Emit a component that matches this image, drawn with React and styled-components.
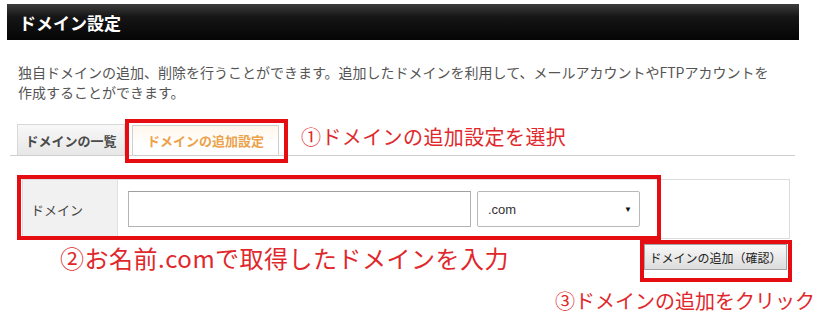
import styled, { createGlobalStyle } from "styled-components";

const GlobalStyle = createGlobalStyle`
body {
  margin: 0;
  background: #fff;
  font-family: "Noto Sans CJK JP", "Noto Sans", sans-serif;
}
`;

const RED = "#e60d12";
const NOTE_RED = "#e0282c";

const Page = styled.div`
width: 825px;
height: 320px;
overflow: hidden;
padding-top: 4px;
box-sizing: border-box;
`;

const Header = styled.h1`
margin: 0 26px 0 7px;
height: 36px;
display: flex;
align-items: center;
padding-left: 12px;
background: linear-gradient(#3d3d3d, #161616 35%, #050505);
color: #fff;
font-size: 17px;
font-weight: 700;
`;

const Description = styled.p`
margin: 22px 0 0 18px;
font-size: 14px;
line-height: 20px;
color: #555;
`;

const TabBar = styled.div`
display: flex;
align-items: flex-end;
height: 36px;
margin: 17px 30px 0 10px;
padding-left: 7px;
border-bottom: 1px solid #cfcfcf;
`;

const Tab = styled.div`
display: flex;
align-items: center;
justify-content: center;
box-sizing: border-box;
width: ${(p) => p.$width}px;
height: ${(p) => (p.$active ? 30 : 31)}px;
border: 1px solid ${(p) => (p.$active ? "#cfcfcf" : "#d8d8d8")};
border-bottom: none;
background: ${(p) =>
  p.$active
    ? "linear-gradient(#fff6ea, #ffffff 60%)"
    : "linear-gradient(#f8f8f8, #e7e7e7)"};
color: ${(p) => (p.$active ? "#eba24a" : "#4a4a4a")};
font-size: 13px;
font-weight: 700;
`;

const TabHighlight = styled.div`
display: flex;
border: 4px solid ${RED};
padding: 2px 5px 4px 3px;
margin-bottom: -8px;
`;

const Note = styled.div`
color: ${NOTE_RED};
font-size: ${(p) => p.$size}px;
line-height: ${(p) => p.$size + 4}px;
white-space: nowrap;
`;

const TabNote = styled(Note)`
align-self: center;
margin-left: 13px;
letter-spacing: 0.4px;
`;

const FormWrap = styled.div`
position: relative;
margin: 23px 35px 0 22px;
`;

const FormRow = styled.div`
display: flex;
height: 60px;
box-sizing: border-box;
border: 1px solid #dcdcdc;
`;

const LabelCell = styled.div`
display: flex;
align-items: center;
width: 95px;
box-sizing: border-box;
padding-left: 8px;
background: #f1f1f1;
border-right: 1px solid #e0e0e0;
font-size: 13px;
color: #444;
`;

const FieldCell = styled.div`
flex: 1;
display: flex;
align-items: center;
gap: 6px;
padding-left: 10px;
`;

const TextInput = styled.input`
width: 343px;
height: 36px;
box-sizing: border-box;
border: 1px solid #b3b3b3;
border-top-color: #a0a0a0;
padding: 0 6px;
font-size: 13px;
`;

const FakeSelect = styled.div`
display: flex;
align-items: center;
justify-content: space-between;
width: 163px;
height: 36px;
box-sizing: border-box;
padding: 0 7px 0 10px;
border: 1px solid #b8b8b8;
border-radius: 2px;
font-family: "Liberation Sans", Arial, sans-serif;
font-size: 13px;
color: #333;
`;

const Arrow = styled.span`
font-size: 8px;
color: #111;
`;

const RedFrame = styled.div`
position: absolute;
left: -5px;
top: -4px;
width: 644px;
height: 65px;
box-sizing: border-box;
border: 4px solid ${RED};
pointer-events: none;
`;

const ActionRow = styled.div`
display: flex;
align-items: flex-start;
margin-top: 1px;
padding-left: 60px;
`;

const InputNote = styled(Note)`
margin-top: 4px;
letter-spacing: 0.5px;
`;

const ButtonFrame = styled.div`
margin-left: auto;
margin-right: 33px;
border: 4px solid ${RED};
padding: 0 1px 8px 0;
`;

const Button = styled.button`
display: block;
width: 143px;
height: 26px;
padding: 0;
border: 1px solid #a3a3a3;
background: linear-gradient(#f8f8f8, #dcdcdc);
font-family: "Noto Sans CJK JP", sans-serif;
font-size: 12px;
color: #222;
`;

const ClickNote = styled(Note)`
margin: 7px 0 0 555px;
`;

export default function App() {
  return (
    <Page>
      <GlobalStyle />
      <Header>ドメイン設定</Header>
      <Description>
        独自ドメインの追加、削除を行うことができます。追加したドメインを利用して、メールアカウントやFTPアカウントを
        <br />
        作成することができます。
      </Description>
      <TabBar>
        <Tab $width={108}>ドメインの一覧</Tab>
        <TabHighlight>
          <Tab $width={147} $active>ドメインの追加設定</Tab>
        </TabHighlight>
        <TabNote $size={20}>①ドメインの追加設定を選択</TabNote>
      </TabBar>
      <FormWrap>
        <FormRow>
          <LabelCell>ドメイン</LabelCell>
          <FieldCell>
            <TextInput type="text" />
            <FakeSelect>
              .com
              <Arrow>▼</Arrow>
            </FakeSelect>
          </FieldCell>
        </FormRow>
        <RedFrame />
      </FormWrap>
      <ActionRow>
        <InputNote $size={24}>②お名前.comで取得したドメインを入力</InputNote>
        <ButtonFrame>
          <Button>ドメインの追加（確認）</Button>
        </ButtonFrame>
      </ActionRow>
      <ClickNote $size={20}>③ドメインの追加をクリック</ClickNote>
    </Page>
  );
}
